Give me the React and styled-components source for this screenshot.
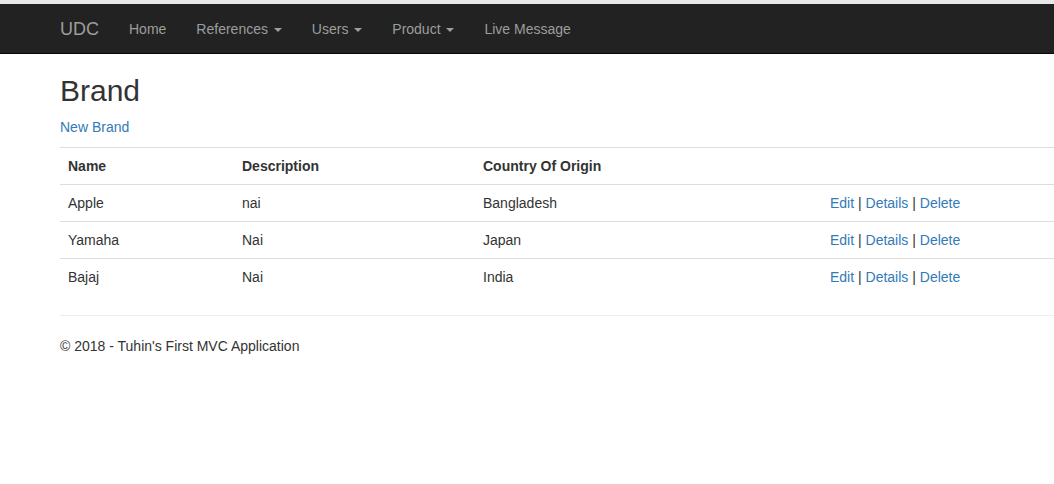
import React from "react";
import styled, { createGlobalStyle } from "styled-components";

const Global = createGlobalStyle`
  html, body { margin: 0; padding: 0; background: #fff; }
  body {
    font-family: "Liberation Sans", Arial, Helvetica, sans-serif;
    font-size: 14px;
    line-height: 20px;
    color: #333;
    overflow: hidden;
  }
  * { box-sizing: border-box; }
`;

const TopStrip = styled.div`
  height: 4px;
  background: #e8e8e8;
`;

const Navbar = styled.nav`
  height: 50px;
  background: #222;
  border-bottom: 1px solid #080808;
  display: flex;
  align-items: center;
  padding-left: 45px;
`;

const Brand = styled.a`
  font-size: 18px;
  line-height: 20px;
  color: #9d9d9d;
  padding: 0 15px;
  text-decoration: none;
`;

const NavList = styled.ul`
  display: flex;
  list-style: none;
  margin: 0;
  padding: 0;
`;

const NavLink = styled.a`
  display: block;
  color: #9d9d9d;
  padding: 15px 15px 14px;
  line-height: 20px;
  text-decoration: none;
  white-space: pre;
`;

const Caret = styled.span`
  display: inline-block;
  width: 0;
  height: 0;
  margin-left: 2px;
  vertical-align: middle;
  border-top: 4px solid #9d9d9d;
  border-left: 4px solid transparent;
  border-right: 4px solid transparent;
`;

const Content = styled.main`
  padding: 0 0 0 60px;
`;

const Title = styled.h2`
  font-size: 30px;
  font-weight: 500;
  line-height: 33px;
  margin: 20px 0 10px;
  color: #333;
`;

const Para = styled.p`
  margin: 0 0 10px;
`;

const Link = styled.a`
  color: #337ab7;
  text-decoration: none;
`;

const Table = styled.table`
  width: 100%;
  border-collapse: collapse;
  border-spacing: 0;
  margin-bottom: 20px;
  table-layout: fixed;
`;

const Th = styled.th`
  text-align: left;
  font-weight: bold;
  padding: 8px;
  line-height: 20px;
  border-top: 1px solid #ddd;
  width: ${(p) => p.$w || "auto"};
`;

const Td = styled.td`
  padding: 8px;
  line-height: 20px;
  border-top: 1px solid #ddd;
  white-space: nowrap;
`;

const Rule = styled.hr`
  margin: 20px 0;
  border: 0;
  border-top: 1px solid #eee;
`;

const Footer = styled.footer`
  p { margin: 0 0 10px; }
`;

const navItems = [
  { label: "Home" },
  { label: "References", caret: true },
  { label: "Users", caret: true },
  { label: "Product", caret: true },
  { label: "Live Message" },
];

const rows = [
  ["Apple", "nai", "Bangladesh"],
  ["Yamaha", "Nai", "Japan"],
  ["Bajaj", "Nai", "India"],
];

export default function App() {
  return (
    <>
      <Global />
      <TopStrip />
      <Navbar>
        <Brand href="#">UDC</Brand>
        <NavList>
          {navItems.map((n) => (
            <li key={n.label}>
              <NavLink href="#">
                {n.label}
                {n.caret && " "}
                {n.caret && <Caret />}
              </NavLink>
            </li>
          ))}
        </NavList>
      </Navbar>
      <Content>
        <Title>Brand</Title>
        <Para>
          <Link href="#">New Brand</Link>
        </Para>
        <Table>
          <tbody>
            <tr>
              <Th $w="174px">Name</Th>
              <Th $w="241px">Description</Th>
              <Th $w="347px">Country Of Origin</Th>
              <Th />
            </tr>
            {rows.map((r) => (
              <tr key={r[0]}>
                <Td>{r[0]}</Td>
                <Td>{r[1]}</Td>
                <Td>{r[2]}</Td>
                <Td>
                  <Link href="#">Edit</Link> | <Link href="#">Details</Link> |{" "}
                  <Link href="#">Delete</Link>
                </Td>
              </tr>
            ))}
          </tbody>
        </Table>
        <Rule />
        <Footer>
          <p>© 2018 - Tuhin's First MVC Application</p>
        </Footer>
      </Content>
    </>
  );
}
